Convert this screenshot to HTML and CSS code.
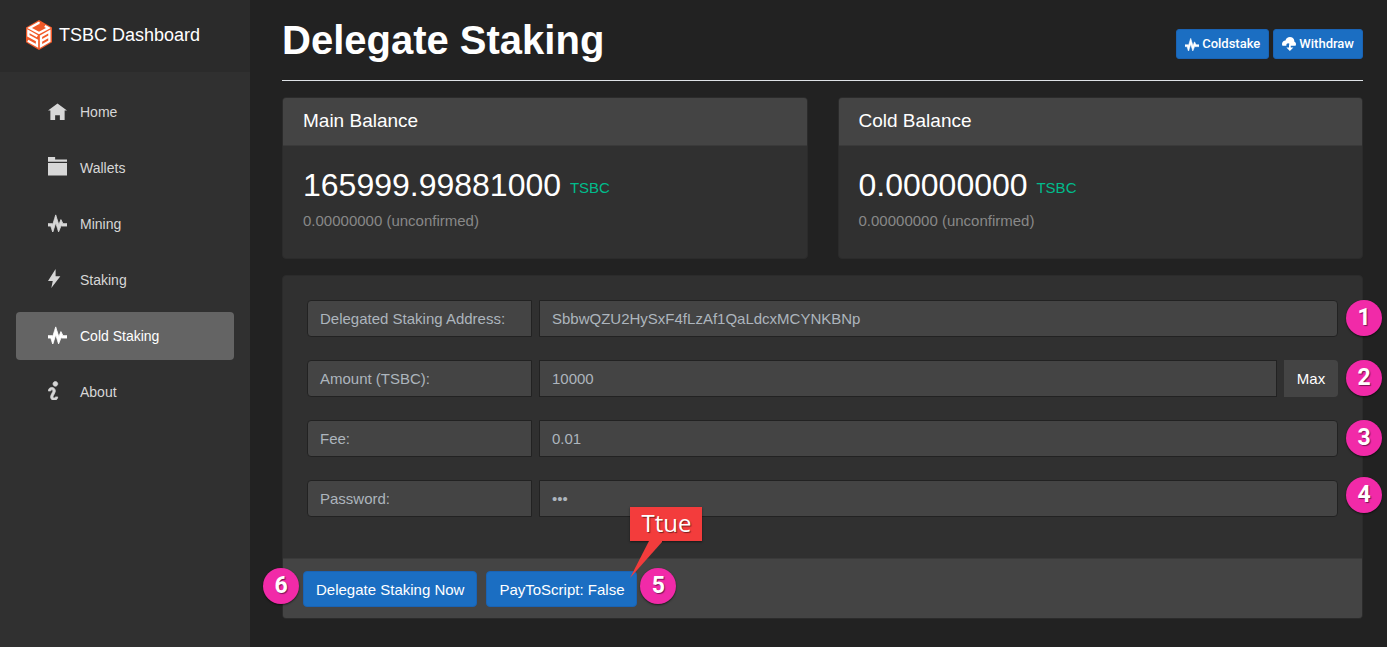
FILE: index.html
```html
<!DOCTYPE html>
<html lang="en">
<head>
<meta charset="utf-8">
<meta name="viewport" content="width=device-width, initial-scale=1">
<title>TSBC Dashboard</title>
<link rel="stylesheet" href="styles.css">
</head>
<body>
<svg class="symbols" aria-hidden="true">
  <symbol id="home" viewBox="0 0 8 8"><path transform="translate(0 1)" d="M4 0l-4 3h1v4h2v-2h2v2h2v-4h1z"/></symbol>
  <symbol id="folder" viewBox="0 0 8 8"><path d="M0 0v2h8v-1h-5v-1zM0 2.5v5.3h8v-5.3z"/></symbol>
  <symbol id="pulse" viewBox="0 0 8 8"><path stroke="currentColor" stroke-width=".35" transform="translate(0 .8)" d="M3.25 0l-.47 1.53-.78 2.56-.03-.06-.09-.34h-1.88v1h1.16l.38 1.16.47 1.47.47-1.5.78-2.5.78 2.5.41 1.34.53-1.28.59-1.47.13.28h2.31v-1h-1.69l-.38-.75-.5-.97-.41 1.03-.47 1.19-.84-2.66z"/></symbol>
  <symbol id="bolt" viewBox="0 0 8 8"><path d="M3.2 0l-3.2 5h2l-.6 3 3.8-5h-2z"/></symbol>
  <symbol id="info" viewBox="0 0 8 8"><path stroke="currentColor" stroke-width=".3" transform="translate(.1 .2)" d="M3 0c-.55 0-1 .45-1 1s.45 1 1 1 1-.45 1-1-.45-1-1-1zm-1.5 2.5c-.83 0-1.5.67-1.5 1.5h1c0-.28.22-.5.5-.5s.5.22.5.5-1 1.64-1 2.5c0 .86.67 1.5 1.5 1.5s1.5-.67 1.5-1.5h-1c0 .28-.22.5-.5.5s-.5-.22-.5-.5c0-.36 1-1.84 1-2.5 0-.81-.67-1.5-1.5-1.5z"/></symbol>
  <symbol id="cloud" viewBox="0 0 8 8"><path d="M4.5 0c-1.21 0-2.27.86-2.5 2-1.1 0-2 .9-2 2 0 .37.11.71.28 1h2.22v-.5c0-.55.45-1 1-1s1 .45 1 1v.5h3.22c.17-.29.28-.63.28-1 0-.65-.42-1.29-1-1.5v-.5c0-1.1-1.12-2-2.5-2zm-.16 4a.5.5 0 0 0-.34.5v1.5h-1.5l2 2 2-2h-1.5v-1.5a.5.5 0 0 0-.66-.5z"/></symbol>
</svg>
<div class="app">
  <aside class="sidebar">
    <a class="brand" href="#">
      <svg class="brand-logo" viewBox="0 0 26 30" aria-hidden="true">
        <path fill="#f15a29" d="M13 0l13 7.5v14.8l-13 7.7-13-7.7v-14.8z"/>
        <g fill="none" stroke="#fff" stroke-width="2.3">
          <path d="M13.6 3.1L12.6 2.9 3.6 8 13 13 22.4 8 18.8 6"/>
          <path d="M11.4 16.2L2.4 11.2v4.5l8.6 4.8v5.3L1.8 20.8"/>
          <path d="M15 16.2l8.4-4.7v9.7L15 26zM15 21.1l8.4-4.8"/>
        </g>
      </svg>
      <span>TSBC Dashboard</span>
    </a>
    <nav class="menu">
      <a class="menu-link" href="#"><svg class="menu-icon"><use href="#home"/></svg>Home</a>
      <a class="menu-link" href="#"><svg class="menu-icon"><use href="#folder"/></svg>Wallets</a>
      <a class="menu-link" href="#"><svg class="menu-icon"><use href="#pulse"/></svg>Mining</a>
      <a class="menu-link" href="#"><svg class="menu-icon"><use href="#bolt"/></svg>Staking</a>
      <a class="menu-link active" href="#" aria-current="page"><svg class="menu-icon"><use href="#pulse"/></svg>Cold Staking</a>
      <a class="menu-link" href="#"><svg class="menu-icon"><use href="#info"/></svg>About</a>
    </nav>
  </aside>
  <main class="content">
    <header class="page-head">
      <h1>Delegate Staking</h1>
      <div class="toolbar">
        <button class="btn btn-small" type="button"><svg class="btn-icon"><use href="#pulse"/></svg>Coldstake</button>
        <button class="btn btn-small" type="button"><svg class="btn-icon"><use href="#cloud"/></svg>Withdraw</button>
      </div>
    </header>
    <div class="balances">
      <section class="card">
        <h2 class="card-head">Main Balance</h2>
        <div class="card-body">
          <p class="amount">165999.99881000 <span class="unit">TSBC</span></p>
          <p class="pending">0.00000000 (unconfirmed)</p>
        </div>
      </section>
      <section class="card">
        <h2 class="card-head">Cold Balance</h2>
        <div class="card-body">
          <p class="amount">0.00000000 <span class="unit">TSBC</span></p>
          <p class="pending">0.00000000 (unconfirmed)</p>
        </div>
      </section>
    </div>
    <form class="card">
      <div class="fields">
        <div class="field">
          <label class="field-label" for="address">Delegated Staking Address:</label>
          <input class="field-input last" id="address" type="text" value="SbbwQZU2HySxF4fLzAf1QaLdcxMCYNKBNp">
          <span class="badge badge-row">1</span>
        </div>
        <div class="field">
          <label class="field-label" for="amount">Amount (TSBC):</label>
          <input class="field-input" id="amount" type="text" value="10000">
          <button class="max" type="button">Max</button>
          <span class="badge badge-row">2</span>
        </div>
        <div class="field">
          <label class="field-label" for="fee">Fee:</label>
          <input class="field-input last" id="fee" type="text" value="0.01">
          <span class="badge badge-row">3</span>
        </div>
        <div class="field">
          <label class="field-label" for="password">Password:</label>
          <input class="field-input last" id="password" type="password" value="abc">
          <span class="badge badge-row badge-raised">4</span>
        </div>
      </div>
      <div class="actions">
        <div class="action">
          <button class="btn" type="button">Delegate Staking Now</button>
          <span class="badge badge-before">6</span>
        </div>
        <div class="action">
          <button class="btn" type="button">PayToScript: False</button>
          <span class="badge badge-after">5</span>
          <div class="callout">Ttue<svg class="callout-tail" viewBox="0 0 32 37" aria-hidden="true"><path d="M19 0h14L0 37z"/></svg></div>
        </div>
      </div>
    </form>
  </main>
</div>
</body>
</html>
```
FILE: styles.css
```css
* { box-sizing: border-box; }

body {
  margin: 0;
  background: #222;
  color: #fff;
  font: 15px/23px "Liberation Sans", Arial, sans-serif;
}

button, input { font: inherit; }

h1, h2, p { margin: 0; font-weight: 400; }

.symbols { position: absolute; width: 0; height: 0; }

.app { display: flex; min-height: 100vh; }

/* Sidebar */
.sidebar { flex: 0 0 250px; background: #303030; }

.brand {
  display: flex;
  align-items: center;
  gap: 7px;
  height: 72px;
  padding: 0 26px 2px;
  background: #2b2b2b;
  color: #fff;
  font-size: 18px;
  text-decoration: none;
}

.brand-logo { width: 26px; height: 30px; }

.menu {
  display: flex;
  flex-direction: column;
  gap: 8px;
  padding: 16px;
}

.menu-link {
  display: flex;
  align-items: center;
  gap: 13px;
  height: 48px;
  padding: 0 32px;
  border-radius: 4px;
  color: #d7d7d7;
  font-size: 14px;
  text-decoration: none;
}

.menu-link.active { background: #646464; color: #fff; }

.menu-icon {
  width: 19px;
  height: 19px;
  margin-bottom: 4px;
  fill: currentColor;
}

/* Page header */
.content { flex: 1; min-width: 0; padding: 16px 24px 28px 32px; }

.page-head {
  display: flex;
  justify-content: space-between;
  align-items: center;
  margin-bottom: 16px;
  padding-bottom: 16px;
  border-bottom: 1px solid #dee2e6;
}

h1 { font-size: 40px; line-height: 48px; font-weight: 700; }

.toolbar { display: flex; gap: 4px; padding-top: 8px; }

.btn {
  height: 36px;
  padding: 0 12px;
  border: 1px solid #1a63b4;
  border-radius: 4px;
  background: #1b6ec2;
  color: #fff;
  white-space: nowrap;
}

.btn-small {
  display: flex;
  align-items: center;
  gap: 3px;
  height: 30px;
  padding: 0 8px 1px;
  border-radius: 3px;
  font-family: Roboto, sans-serif;
  font-size: 13px;
  font-weight: 500;
}

.btn-icon { width: 14px; height: 14px; fill: currentColor; }

/* Cards */
.balances {
  display: grid;
  grid-template-columns: 1fr 1fr;
  gap: 30px;
  margin-bottom: 16px;
}

.card {
  border: 1px solid #2b2b2b;
  border-radius: 4px;
  background: #303030;
}

.card-head {
  padding: 11px 20px 13px;
  border-bottom: 1px solid #3a3a3a;
  border-radius: 3px 3px 0 0;
  background: #444;
  font-size: 19px;
}

.card-body { padding: 20px 20px 26px; }

.amount { margin-bottom: 5px; font-size: 32px; line-height: 38px; }

.unit {
  color: #00bc8c;
  font-size: 15px;
  line-height: 23px;
  vertical-align: middle;
}

.pending { color: #888; }

/* Form */
.fields {
  display: flex;
  flex-direction: column;
  gap: 23px;
  padding: 24px 24px 41px;
}

.field { position: relative; display: flex; gap: 7px; height: 37px; }

.field-label, .field-input {
  border: 1px solid #222;
  background: #444;
  color: #adb5bd;
}

.field-label {
  flex: 0 0 225px;
  padding: 6px 12px;
  border-radius: 4px 0 0 4px;
}

.field-input {
  flex: 1;
  min-width: 0;
  padding: 0 12px;
  border-radius: 0;
}

.field-input.last { border-radius: 0 4px 4px 0; }

.max {
  width: 54px;
  padding: 0;
  border: 0;
  border-radius: 0 4px 4px 0;
  background: #444;
  color: #fff;
}

.actions {
  display: flex;
  gap: 9px;
  padding: 12px 20px 11px;
  border-top: 1px solid #3a3a3a;
  border-radius: 0 0 3px 3px;
  background: #444;
}

.action { position: relative; }

/* Step markers */
.badge {
  position: absolute;
  width: 36px;
  height: 36px;
  border-radius: 50%;
  background: #f12aa8;
  box-shadow: 0 1px 2px rgba(0, 0, 0, .6);
  font: 700 23px/36px Roboto, sans-serif;
  text-align: center;
  text-shadow: 1px 1px 1px rgba(0, 0, 0, .5);
}

.badge-row { top: 0; right: -44px; }
.badge-raised { top: -3px; }
.badge-before { top: -3px; left: -40px; }
.badge-after { top: -3px; right: -39px; }

.callout {
  position: absolute;
  right: -65px;
  bottom: 66px;
  width: 72px;
  height: 34px;
  background: #f33c3c;
  box-shadow: 0 1px 2px rgba(0, 0, 0, .5);
  font: 24px/32px "Open Sans", sans-serif;
  text-align: center;
  text-shadow: 1px 1px 1px rgba(0, 0, 0, .5);
}

.callout-tail {
  position: absolute;
  top: 34px;
  left: 0;
  width: 32px;
  height: 37px;
  fill: #f33c3c;
}
```
